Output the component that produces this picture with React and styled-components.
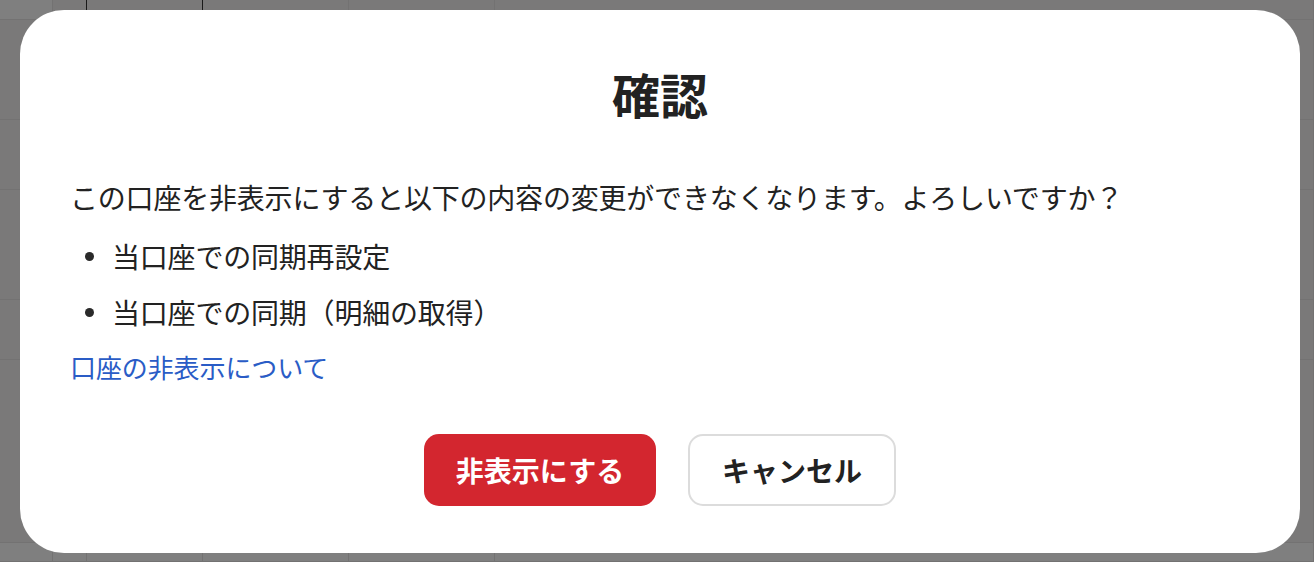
import React from 'react';
import styled, { createGlobalStyle } from 'styled-components';

const GlobalStyle = createGlobalStyle`
  html, body {
    margin: 0;
    padding: 0;
    height: 100%;
    overflow: hidden;
  }
  body {
    font-family: "Noto Sans CJK JP", "Noto Sans", sans-serif;
    color: #222;
  }
`;

// table that sits behind the dimmed overlay
const BackTable = styled.div`
  display: grid;
  grid-template-columns: 53px 34px 116px 146px 146px 1fr;
  grid-template-rows: 20px 100px 70px 110px 60px 183px 19px;
  width: 100vw;
  height: 100vh;
  background: #f4f3f3;
`;

const Cell = styled.div`
  background: ${p => (p.$light ? '#ffffff' : '#f4f3f3')};
  border-right: 1px solid ${p => (p.$dark ? '#333' : '#e6e4e4')};
  border-bottom: 1px solid #e6e4e4;
`;

const Overlay = styled.div`
  position: fixed;
  inset: 0;
  background: rgba(0, 0, 0, 0.5);
  display: flex;
  align-items: flex-start;
  padding: 10px 14px 0 20px;
`;

const Modal = styled.div`
  width: 1280px;
  height: 543px;
  box-sizing: border-box;
  background: #fff;
  border-radius: 44px;
  padding: 50px 50px 47px;
  display: flex;
  flex-direction: column;
`;

const Title = styled.h2`
  margin: 0;
  font-size: 48px;
  line-height: 67px;
  font-weight: 700;
  text-align: center;
  color: #222;
`;

const Message = styled.p`
  margin: 49px 0 0;
  font-size: 28px;
  line-height: 42px;
  letter-spacing: -0.2px;
`;

const List = styled.ul`
  margin: 17px 0 0;
  padding: 0;
  list-style: none;
  display: flex;
  flex-direction: column;
  gap: 14px;
`;

const Item = styled.li`
  position: relative;
  padding-left: 42px;
  font-size: 28px;
  line-height: 42px;
  letter-spacing: -0.2px;

  &::before {
    content: '';
    position: absolute;
    left: 15px;
    top: 17px;
    width: 9px;
    height: 9px;
    border-radius: 50%;
    background: #2a2a2a;
  }
`;

const HelpLink = styled.a`
  margin-top: 14px;
  align-self: flex-start;
  font-size: 26px;
  line-height: 40px;
  letter-spacing: -0.1px;
  color: #2a5cc6;
  text-decoration: none;
`;

const Actions = styled.div`
  margin-top: 47px;
  display: flex;
  justify-content: center;
  gap: 32px;
`;

const Button = styled.button`
  height: 72px;
  width: ${p => p.$width}px;
  box-sizing: border-box;
  border-radius: 15px;
  font-family: inherit;
  font-size: 28px;
  font-weight: 700;
  cursor: pointer;
  background: ${p => (p.$danger ? '#d3262f' : '#fff')};
  color: ${p => (p.$danger ? '#fff' : '#222')};
  border: ${p => (p.$danger ? 'none' : '2px solid #dcdcdc')};
`;

const darkCols = [1, 2];
const lightCols = [0];

export default function App() {
  const cells = [];
  for (let r = 0; r < 7; r++) {
    for (let c = 0; c < 6; c++) {
      cells.push(
        <Cell
          key={`${r}-${c}`}
          $dark={r === 0 && darkCols.includes(c)}
          $light={(r === 0 && lightCols.includes(c)) || r === 6}
        />
      );
    }
  }

  return (
    <>
      <GlobalStyle />
      <BackTable>{cells}</BackTable>
      <Overlay>
        <Modal role="dialog">
          <Title>確認</Title>
          <Message>
            この口座を非表示にすると以下の内容の変更ができなくなります。よろしいですか？
          </Message>
          <List>
            <Item>当口座での同期再設定</Item>
            <Item>当口座での同期（明細の取得）</Item>
          </List>
          <HelpLink href="#">口座の非表示について</HelpLink>
          <Actions>
            <Button $danger $width={232}>非表示にする</Button>
            <Button $width={208}>キャンセル</Button>
          </Actions>
        </Modal>
      </Overlay>
    </>
  );
}
